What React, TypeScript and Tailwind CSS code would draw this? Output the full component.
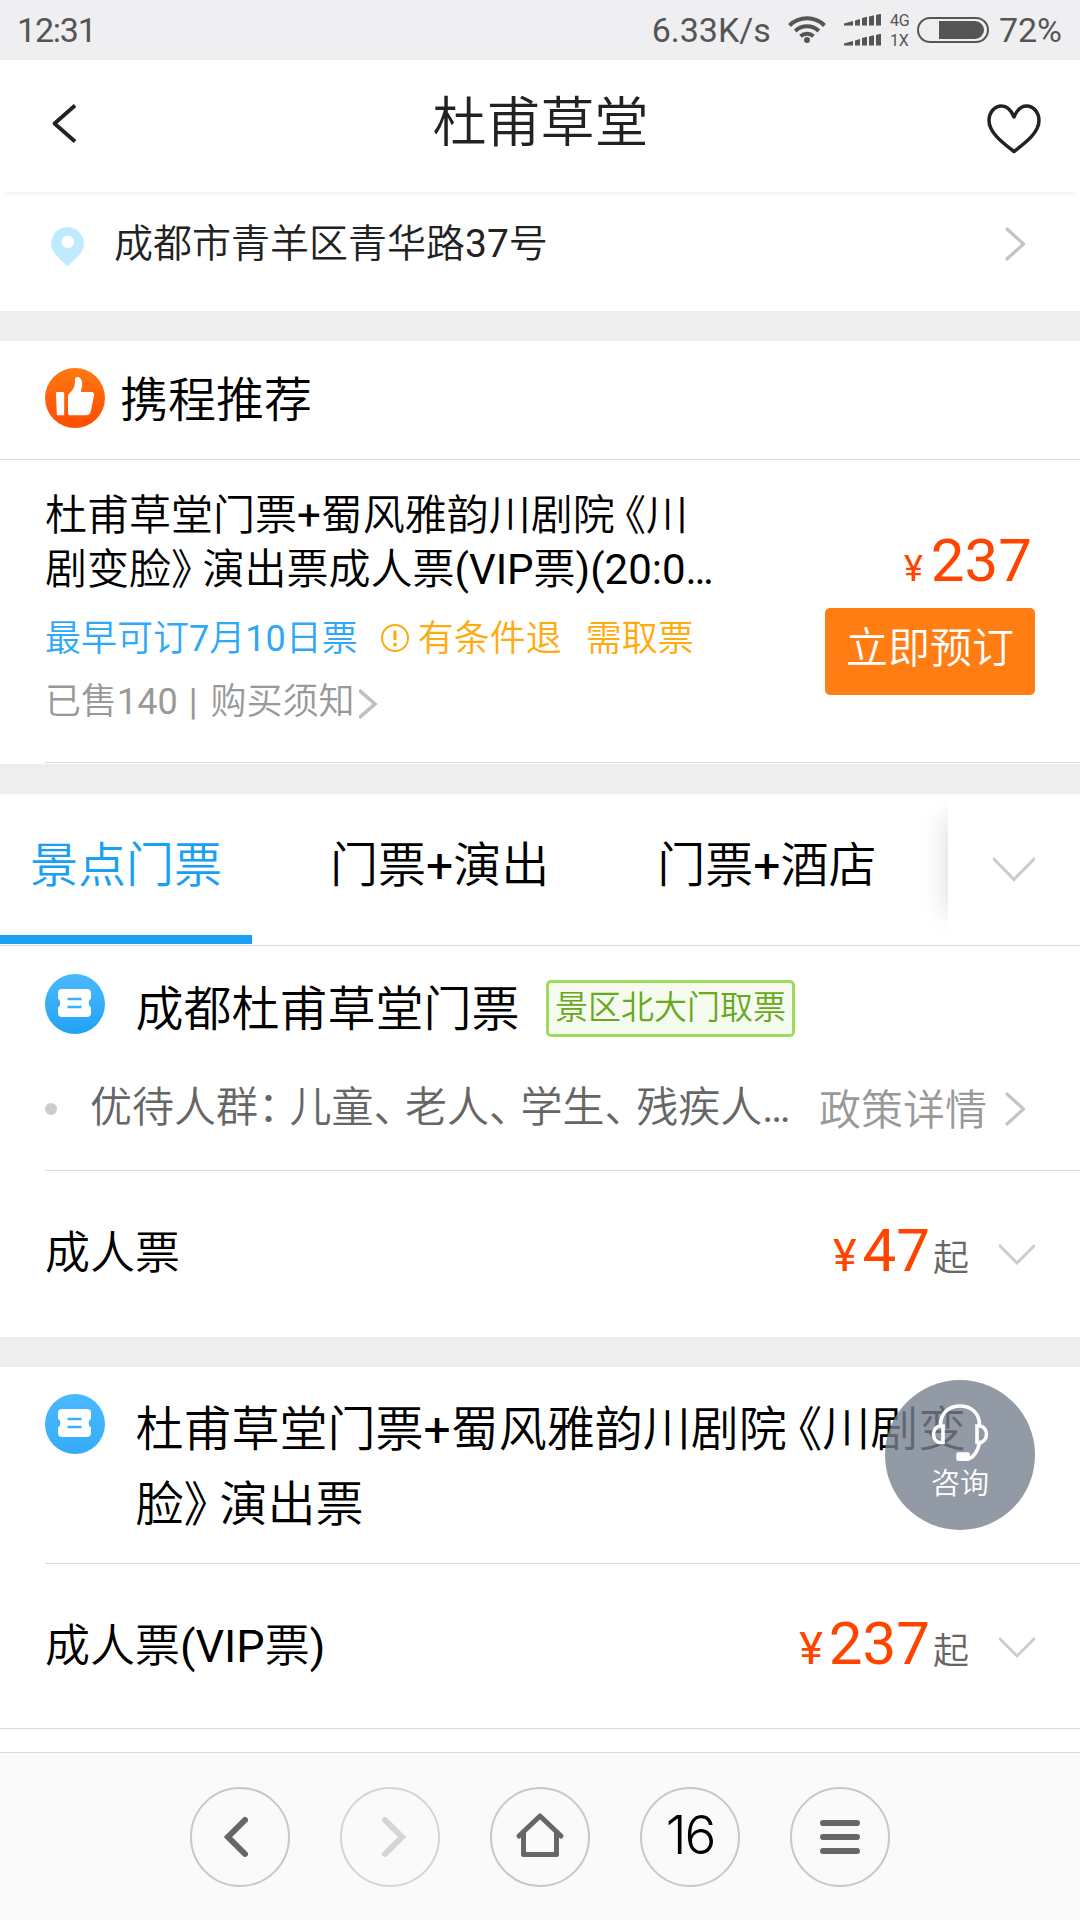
import type { ReactNode } from "react";

/* Full-width punctuation set tighter than one em. */
const L = ({ children }: { children: ReactNode }) => (
  <span className="pl-[0.24em] [font-feature-settings:'halt']">{children}</span>
);
const R = ({ children }: { children: ReactNode }) => (
  <span className="pr-[0.25em] [font-feature-settings:'halt']">{children}</span>
);

function StatusBar() {
  const bars = [0, 1, 2, 3, 4];
  const signal = (
    <svg width="38" height="12" viewBox="0 0 38 12" fill="#555">
      <path d="M0 9.5L9 7v4.500H0zM11 6.500L16 5v6.500h-5z" />
      {bars.slice(2).map((i) => (
        <path key={i} d={`M${4 + i * 7} ${7 - i * 1.5}l5 -1.300V11.500h-5z`} />
      ))}
    </svg>
  );
  return (
    <div className="flex h-[60px] items-center bg-[#efeff1] pl-[17px] pr-[18px] text-[34px] leading-[60px] text-[#555]">
      <span className="tracking-[-1.2px]">12:31</span>
      <span className="ml-auto">6.33K/s</span>
      <svg className="ml-[17px] mt-[-2px]" width="38" height="30" viewBox="0 0 38 30" fill="none" stroke="#555" strokeWidth="4">
        <path d="M1.500 11.500a25 25 0 0 1 35 0" />
        <path d="M7.200 17a17 17 0 0 1 23.600 0" />
        <path d="M12.500 22.300a9.500 9.500 0 0 1 13 0" />
        <circle cx="19" cy="26" r="3" fill="#555" stroke="none" />
      </svg>
      <div className="ml-[18px] flex h-[32px] flex-col justify-between">
        {signal}
        {signal}
      </div>
      <div className="ml-[8px] flex w-[22px] flex-col text-[16px] leading-[20px]">
        <span className="mt-px">4G</span>
        <span>1X</span>
      </div>
      <svg className="ml-[5px]" width="72" height="28" viewBox="0 0 72 28" fill="none">
        <rect x="1" y="2" width="70" height="24" rx="12" stroke="#555" strokeWidth="2" />
        <path d="M22 5h36a9 9 0 0 1 0 18H22z" fill="#555" />
      </svg>
      <span className="ml-[10px]">72%</span>
    </div>
  );
}

function Header() {
  return (
    <div className="relative z-10 flex h-[132px] items-center justify-between bg-white pl-[50px] pr-[36px] shadow-[0_6px_6px_-5px_rgba(0,0,0,0.08)]">
      <svg width="30" height="44" viewBox="0 0 30 44" fill="none" stroke="#222" strokeWidth="3.800" strokeLinejoin="round">
        <path d="M25 1.500L4.500 19.500L25 37.500" />
      </svg>
      <h1 className="ml-[17px] mt-[-4px] text-[54px] font-normal leading-[60px] text-[#222]">杜甫草堂</h1>
      <svg className="mt-[6px]" width="60" height="52" viewBox="0 0 60 52" fill="none" stroke="#222" strokeWidth="3.500" strokeLinejoin="round">
        <path d="M30 14C26.500 5.500 21.500 3 17.500 3C10.500 3 5 9.500 5 17.500C5 29 17 38.500 30 48.500C43 38.500 55 29 55 17.500C55 9.500 49.500 3 42.500 3C38.500 3 33.500 5.500 30 14Z" />
      </svg>
    </div>
  );
}

const ChevronRight = () => (
  <svg width="21" height="34" viewBox="0 0 21 34" fill="none" stroke="#c4c4c4" strokeWidth="3.200" strokeLinecap="round" strokeLinejoin="round">
    <path d="M2 2L18.500 17L2 32" />
  </svg>
);

const ChevronDown = ({ wide }: { wide?: boolean }) =>
  wide ? (
    <svg width="42" height="27" viewBox="0 0 42 27" fill="none" stroke="#ccc" strokeWidth="3">
      <path d="M0 2L21 23.500L42 2" />
    </svg>
  ) : (
    <svg width="36" height="24" viewBox="0 0 36 24" fill="none" stroke="#ccc" strokeWidth="3">
      <path d="M0 2L18 20L36 2" />
    </svg>
  );

const Gap = () => <div className="h-[30px] bg-[#eee]" />;

function TicketIcon({ id, end }: { id: string; end: string }) {
  return (
    <svg className="shrink-0" width="60" height="60" viewBox="0 0 60 60">
      <defs>
        <linearGradient id={id} x1="0" y1="0" x2="0" y2="1">
          <stop offset="0" stopColor="#4ab9ff" />
          <stop offset="1" stopColor={end} />
        </linearGradient>
      </defs>
      <circle cx="30" cy="30" r="30" fill={`url(#${id})`} />
      <path
        fill="#fff"
        d="M17 15H42a4 4 0 0 1 4 4V24.500a5.500 5.500 0 0 0 0 9V39a4 4 0 0 1 -4 4H17a4 4 0 0 1 -4 -4V33.500a5.500 5.500 0 0 0 0 -9V19a4 4 0 0 1 4 -4Z"
      />
      <path d="M22.500 25H36.500M22.500 33H36.500" stroke="#3aaffa" strokeWidth="2.600" />
    </svg>
  );
}

function Recommend() {
  return (
    <section>
      <div className="flex h-[119px] items-start border-b border-[#dadada] pl-[45px] pt-[27px]">
        <svg width="60" height="60" viewBox="0 0 60 60">
          <defs>
            <linearGradient id="thumb" x1="0" y1="0" x2="0" y2="1">
              <stop offset="0" stopColor="#ff7a10" />
              <stop offset="1" stopColor="#ff4b05" />
            </linearGradient>
          </defs>
          <circle cx="30" cy="30" r="30" fill="url(#thumb)" />
          <path fill="#fff" d="M12 24H18a1.200 1.200 0 0 1 1.200 1.200V47.300H13a1.200 1.200 0 0 1 -1.200 -1.200L11 25a1 1 0 0 1 1 -1Z" />
          <path
            fill="#fff"
            d="M23 45V29C23 26 25 25 27 22.500C30 19 30 15 30 12C30 9.500 31 8.700 33 9C36 9.500 37.300 13 37.200 16C37.200 19 36 21 36 24H46.500C48.500 24 49.300 25.500 49 27.500L46 42.500C45.300 45.500 44 47.300 41 47.300H25.500C24 47.300 23 46.500 23 45Z"
          />
        </svg>
        <h2 className="ml-[15px] mt-[5px] text-[48px] font-normal leading-[56px] text-black">携程推荐</h2>
      </div>
      <div className="flex h-[302px] justify-between pl-[45px] pr-[45px] pt-[29px]">
        <div>
          <p className="whitespace-nowrap text-[42px] leading-[54px] text-black">
            杜甫草堂门票+蜀风雅韵川剧院<L>《</L>川
            <br />
            剧变脸<R>》</R>演出票成人票(VIP票)(20:0…
          </p>
          <div className="mt-[20px] flex h-[44px] items-center whitespace-nowrap text-[36px] leading-[44px] text-[#ffab0f]">
            <span className="text-[#2fa8f8]">最早可订7月10日票</span>
            <svg className="ml-[23px] mt-[-2px]" width="28" height="28" viewBox="0 0 28 28" fill="none" stroke="#ffab0f" strokeWidth="2">
              <circle cx="14" cy="14" r="13" />
              <path d="M14 6.500V16" strokeWidth="3" />
              <circle cx="14" cy="20.500" r="1.900" fill="#ffab0f" stroke="none" />
            </svg>
            <span className="ml-[9px]">有条件退</span>
            <span className="ml-[24px]">需取票</span>
          </div>
          <div className="mt-[19px] flex h-[44px] items-center whitespace-nowrap text-[36px] leading-[44px] text-[#999]">
            <span>已售140</span>
            <span className="ml-[11px]">|</span>
            <span className="ml-[13px]">购买须知</span>
            <svg className="ml-[4px] mt-[4px]" width="19" height="32" viewBox="0 0 19 32" fill="none" stroke="#c0c0c0" strokeWidth="3.600">
              <path d="M0 2L16 16L0 30" />
            </svg>
          </div>
        </div>
        <div className="flex w-[210px] flex-col items-end pt-[37px]">
          <div className="flex items-baseline pr-[3px] leading-[70px] text-[#ff4400]">
            <span className="mr-[8px] text-[36px]">¥</span>
            <span className="text-[60px]">237</span>
          </div>
          <button className="mt-[4px] h-[87px] w-[210px] rounded-[5px] bg-[#ff7d13] pb-[6px] text-[42px] leading-[50px] text-white">立即预订</button>
        </div>
      </div>
      <div className="ml-[45px] mb-px h-px bg-[#dadada]" />
    </section>
  );
}

function Tabs() {
  return (
    <nav className="flex h-[152px] overflow-hidden border-b border-[#dadada]">
      <div className="w-[948px] shrink-0">
        <div className="flex h-[141px] gap-[108px] whitespace-nowrap pl-[30px] pt-[44px] text-[48px] leading-[56px] text-black">
          <span className="text-[#1aa0f2]">景点门票</span>
          <span>门票+演出</span>
          <span>门票+酒店</span>
        </div>
        <div className="h-[9px] w-[252px] bg-[#1aa0f2]" />
      </div>
      <div className="relative grow">
        <div className="absolute left-[4px] top-[29px] h-[86px] w-[100px] shadow-[0_0_26px_4px_rgba(0,0,0,0.17)]" />
        <div className="relative flex h-[151px] justify-center bg-white pt-[62px]">
          <ChevronDown wide />
        </div>
      </div>
    </nav>
  );
}

function PriceRow({ name, price }: { name: string; price: string }) {
  return (
    <div className="flex h-full items-start justify-between pl-[45px] pr-[45px] text-[45px] leading-[60px] text-black">
      <span className="mt-[53px]">{name}</span>
      <div className="mt-[45px] flex items-baseline leading-[70px] text-[#ff4400]">
        <span className="mr-[6px] text-[45px]">¥</span>
        <span className="text-[60px]">{price}</span>
        <span className="ml-[3px] text-[36px] text-[#666]">起</span>
        <span className="ml-[30px] self-start pt-[27px] leading-none">
          <ChevronDown />
        </span>
      </div>
    </div>
  );
}

function Products() {
  return (
    <>
      <section>
        <div className="flex h-[108px] items-start pl-[45px] pt-[28px]">
          <TicketIcon id="ticket-a" end="#22a2f3" />
          <h3 className="ml-[30.5px] mt-[8px] text-[48px] font-normal leading-[56px] text-black">成都杜甫草堂门票</h3>
          <span className="ml-[26.5px] mt-[6px] h-[57px] w-[249px] rounded-[5px] border-3 border-[#9fdc5e] bg-[#f5fbee] text-center text-[33px] leading-[50px] text-[#67a81c]">
            景区北大门取票
          </span>
        </div>
        <div className="flex h-[116px] items-start whitespace-nowrap pl-[45px] pr-[54px] text-[42px] leading-[50px] text-[#666]">
          <span className="mt-[49px] h-[12px] w-[12px] rounded-full bg-[#ccc]" />
          <span className="ml-[33px] mt-[29px]">
            优待人群<R>：</R>儿童<R>、</R>老人<R>、</R>学生<R>、</R>残疾人…
          </span>
          <span className="ml-auto mr-[18px] mt-[32px] text-[#999]">政策详情</span>
          <span className="mt-[38px] leading-none">
            <ChevronRight />
          </span>
        </div>
        <div className="ml-[45px] h-px bg-[#dadada]" />
        <div className="h-[166px]">
          <PriceRow name="成人票" price="47" />
        </div>
      </section>
      <Gap />
      <section className="relative">
        <div className="flex h-[196px] items-start pl-[45px] pt-[27px]">
          <TicketIcon id="ticket-b" end="#35acf8" />
          <h3 className="ml-[30.5px] mt-[-2px] whitespace-nowrap text-[48px] font-normal leading-[75px] text-black">
            杜甫草堂门票+蜀风雅韵川剧院<L>《</L>川剧变
            <br />脸<R>》</R>演出票
          </h3>
        </div>
        <div className="ml-[45px] h-px bg-[#dadada]" />
        <div className="h-[164px]">
          <PriceRow name="成人票(VIP票)" price="237" />
        </div>
        <button className="absolute right-[45px] top-[13px] flex h-[150px] w-[150px] justify-center rounded-full bg-[#76818f]/80 pt-[86px] text-[29px] leading-[36px] text-white">
          <svg className="absolute left-0 top-0" width="150" height="150" viewBox="0 0 150 150" fill="none" stroke="#fff" strokeWidth="3.600">
            <path d="M55.500 45C55.500 33 64 26 75 26C86 26 94.500 33 94.500 45" />
            <path d="M58 46V62.500H55.500A7 8.250 0 0 1 55.500 46Z" />
            <path d="M92 46V62.500H94.500A7 8.250 0 0 0 94.500 46Z" />
            <path d="M94.500 63C93 70 90 76 84 79" />
            <rect x="71.300" y="72.300" width="13.600" height="8.600" rx="2" fill="#fff" stroke="none" />
          </svg>
          咨询
        </button>
      </section>
    </>
  );
}

function NavButton({ children, dim }: { children: ReactNode; dim?: boolean }) {
  return (
    <div
      className={
        dim
          ? "flex h-[100px] w-[100px] items-center justify-center rounded-full border-2 border-[#d5d5d5]"
          : "flex h-[100px] w-[100px] items-center justify-center rounded-full border-2 border-[#c8c8c8]"
      }
    >
      {children}
    </div>
  );
}

function BottomBar() {
  return (
    <div className="flex h-[168px] justify-center gap-[50px] border-t border-[#dadada] bg-[#fafafa] pt-[34px]">
      <NavButton>
        <svg width="96" height="96" viewBox="2 2 96 96" fill="none" stroke="#666" strokeWidth="6" strokeLinecap="round">
          <path d="M55 33L38 50L55 67" />
        </svg>
      </NavButton>
      <NavButton dim>
        <svg width="96" height="96" viewBox="2 2 96 96" fill="none" stroke="#d5d5d5" strokeWidth="6" strokeLinecap="round">
          <path d="M45 33L62 50L45 67" />
        </svg>
      </NavButton>
      <NavButton>
        <svg width="96" height="96" viewBox="2 2 96 96" fill="none" stroke="#666" strokeWidth="5" strokeLinecap="round" strokeLinejoin="round">
          <path d="M29 49L50 29L71 49" />
          <path d="M33.500 46V67.500H66.500V46" />
        </svg>
      </NavButton>
      <NavButton>
        <span className="mt-[-4px] font-['Inter'] text-[53px] font-light leading-[60px] tracking-[-2px] text-black">16</span>
      </NavButton>
      <NavButton>
        <svg width="96" height="96" viewBox="2 2 96 96" fill="none" stroke="#666" strokeWidth="6" strokeLinecap="round">
          <path d="M33 36H67M33 50H67M33 64H67" />
        </svg>
      </NavButton>
    </div>
  );
}

export default function App() {
  return (
    <div
      lang="zh-CN"
      className="flex h-[1920px] w-[1080px] flex-col overflow-hidden bg-white font-['Roboto','Noto_Sans_CJK_SC_DemiLight','Noto_Sans_CJK_SC_Light','Noto_Sans_CJK_SC',sans-serif]"
    >
      <StatusBar />
      <Header />
      <div className="flex h-[119px] items-start bg-white pl-[51px] pr-[54px] pt-[35px]">
        <svg width="33" height="40" viewBox="0 0 33 40">
          <path
            fill="#bfeaff"
            fillRule="evenodd"
            d="M16.500 0A16.500 16.500 0 0 1 29 27L18 38.300Q16.500 39.500 15 38.300L4 27A16.500 16.500 0 0 1 16.500 0ZM16.800 8.700a6.200 6.200 0 1 0 .01 0Z"
          />
        </svg>
        <span className="ml-[30px] mt-[-8px] text-[39px] leading-[50px] text-[#222]">成都市青羊区青华路37号</span>
        <span className="ml-auto leading-none">
          <ChevronRight />
        </span>
      </div>
      <Gap />
      <Recommend />
      <Gap />
      <Tabs />
      <Products />
      <div className="h-[24px] border-t border-[#dadada]" />
      <BottomBar />
    </div>
  );
}
